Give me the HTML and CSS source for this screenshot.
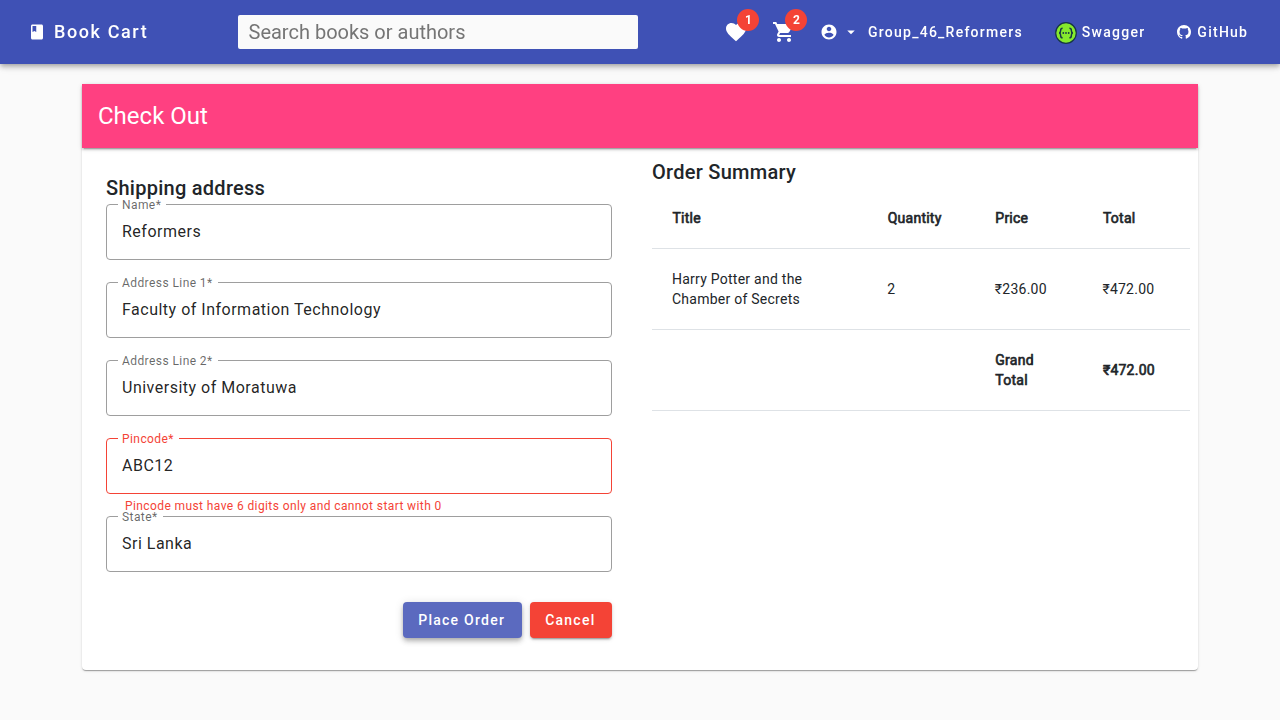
FILE: index.html
```html
<!DOCTYPE html>
<html lang="en">
<head>
<meta charset="utf-8">
<title>Book Cart</title>
<link rel="stylesheet" href="styles.css">
</head>
<body>
<header class="navbar">
  <a class="brand"><svg class="icon-18" viewBox="0 0 24 24"><path d="M18 2H6c-1.100 0-2 .9-2 2v16c0 1.100.9 2 2 2h12c1.100 0 2-.9 2-2V4c0-1.100-.9-2-2-2zM6 4h5v8l-2.500-1.500L6 12V4z"/></svg><span>Book Cart</span></a>
  <input class="search" type="search" placeholder="Search books or authors">
  <nav class="actions">
    <a class="badge-icon"><svg viewBox="0 0 24 24"><path d="M12 21.350l-1.450-1.320C5.400 15.360 2 12.280 2 8.500 2 5.420 4.420 3 7.500 3c1.740 0 3.410.81 4.500 2.090C13.090 3.810 14.760 3 16.500 3 19.580 3 22 5.420 22 8.500c0 3.780-3.400 6.860-8.550 11.540L12 21.350z"/></svg><span class="badge">1</span></a>
    <a class="badge-icon"><svg viewBox="0 0 24 24"><path d="M7 18c-1.100 0-1.990.9-1.990 2S5.900 22 7 22s2-.9 2-2-.9-2-2-2zM1 2v2h2l3.600 7.590-1.350 2.450c-.16.280-.25.610-.25.960 0 1.100.9 2 2 2h12v-2H7.420c-.14 0-.25-.11-.25-.25l.03-.12.900-1.630h7.450c.75 0 1.410-.41 1.750-1.030l3.580-6.490c.08-.14.120-.31.120-.48 0-.55-.45-1-1-1H5.210l-.94-2H1zm16 16c-1.100 0-1.990.9-1.990 2s.89 2 1.990 2 2-.9 2-2-.9-2-2-2z"/></svg><span class="badge">2</span></a>
    <a class="user"><svg class="icon-18" viewBox="0 0 24 24"><path d="M12 2C6.480 2 2 6.480 2 12s4.480 10 10 10 10-4.480 10-10S17.520 2 12 2zm0 3c1.660 0 3 1.340 3 3s-1.340 3-3 3-3-1.340-3-3 1.340-3 3-3zm0 14.200c-2.500 0-4.710-1.280-6-3.220.03-1.990 4-3.080 6-3.080 1.990 0 5.970 1.090 6 3.080-1.290 1.940-3.500 3.220-6 3.220z"/></svg><svg class="icon-18 caret" viewBox="0 0 24 24"><path d="M7 10l5 5 5-5z"/></svg><span>Group_46_Reformers</span></a>
    <a class="swagger"><svg viewBox="0 0 22 22"><circle cx="11" cy="11" r="10.300" fill="#85ea2d" stroke="#173647" stroke-width="1.200"/><g fill="none" stroke="#173647" stroke-width="1.500"><path d="M7.600 6.200c-1.700 0-1.900.7-1.900 1.800 0 1.700.1 2.600-1.500 3 1.600.4 1.500 1.300 1.500 3 0 1.100.2 1.800 1.900 1.800M14.400 6.200c1.700 0 1.900.7 1.900 1.800 0 1.700-.1 2.600 1.500 3-1.600.4-1.500 1.300-1.500 3 0 1.100-.2 1.800-1.900 1.800"/></g><g fill="#173647"><circle cx="8.300" cy="11" r=".9"/><circle cx="11" cy="11" r=".9"/><circle cx="13.700" cy="11" r=".9"/></g></svg><span>Swagger</span></a>
    <a class="github"><svg viewBox="0 0 16 16"><path d="M8 0C3.580 0 0 3.580 0 8c0 3.540 2.290 6.530 5.470 7.590.4.070.55-.17.55-.38 0-.19-.01-.82-.01-1.490-2.010.37-2.530-.49-2.690-.94-.09-.23-.48-.94-.82-1.130-.28-.15-.68-.52-.01-.53.63-.01 1.080.58 1.230.82.720 1.210 1.870.87 2.330.66.070-.52.280-.87.510-1.070-1.780-.2-3.640-.89-3.640-3.950 0-.87.310-1.590.82-2.150-.08-.2-.36-1.020.08-2.120 0 0 .67-.21 2.200.82.640-.18 1.320-.27 2-.27s1.360.09 2 .27c1.530-1.040 2.200-.82 2.200-.82.440 1.100.16 1.920.08 2.120.51.560.82 1.270.82 2.150 0 3.070-1.870 3.750-3.650 3.950.29.250.54.730.54 1.480 0 1.070-.01 1.930-.01 2.200 0 .21.150.46.550.38A8.010 8.010 0 0 0 16 8c0-4.420-3.580-8-8-8z"/></svg><span>GitHub</span></a>
  </nav>
</header>
<main class="card">
  <div class="card-header">Check Out</div>
  <div class="columns">
    <section class="shipping">
      <h2>Shipping address</h2>
      <form class="fields">
        <fieldset class="field"><legend>Name*</legend><div class="value">Reformers</div></fieldset>
        <fieldset class="field"><legend>Address Line 1*</legend><div class="value">Faculty of Information Technology</div></fieldset>
        <fieldset class="field"><legend>Address Line 2*</legend><div class="value">University of Moratuwa</div></fieldset>
        <fieldset class="field invalid"><legend>Pincode*</legend><div class="value">ABC12</div></fieldset>
        <div class="error">Pincode must have 6 digits only and cannot start with 0</div>
        <fieldset class="field"><legend>State*</legend><div class="value">Sri Lanka</div></fieldset>
      </form>
      <div class="buttons"><button class="btn primary">Place Order</button><button class="btn warn">Cancel</button></div>
    </section>
    <section class="summary">
      <h2>Order Summary</h2>
      <div class="row bold"><div>Title</div><div>Quantity</div><div>Price</div><div>Total</div></div>
      <div class="row"><div>Harry Potter and the Chamber of Secrets</div><div>2</div><div>₹236.00</div><div>₹472.00</div></div>
      <div class="row bold"><div></div><div></div><div>Grand Total</div><div>₹472.00</div></div>
    </section>
  </div>
</main>
</body>
</html>
```
FILE: styles.css
```css
* { box-sizing: border-box; }
body {
  margin: 0;
  height: 720px;
  overflow: hidden;
  background: #fafafa;
  color: #212529;
  font-family: Roboto, "Liberation Sans", sans-serif;
  font-size: 14px;
}
svg { display: block; fill: currentColor; flex: none; }
.navbar {
  position: relative;
  height: 64px;
  display: flex;
  align-items: center;
  padding: 0 31px 0 28px;
  background: #3f51b5;
  color: #fff;
  font-weight: 500;
  letter-spacing: 1.25px;
  will-change: transform;
  box-shadow: 0 2px 4px -1px rgba(0,0,0,.2), 0 4px 5px rgba(0,0,0,.14), 0 1px 10px rgba(0,0,0,.12);
}
.icon-18 { width: 18px; height: 18px; }
.brand { display: flex; align-items: center; gap: 8px; width: 210px; font-size: 18px; line-height: 20px; letter-spacing: 1.6px; }
.search {
  width: 400px;
  height: 34px;
  padding: 0 10.5px;
  border: 0;
  border-radius: 2px;
  background: #fafafa;
  font: 400 20px Roboto, sans-serif;
}
.search::placeholder { color: #757575; }
.actions { flex: 1; display: flex; align-items: center; }
.badge-icon { position: relative; margin-left: 86px; }
.badge-icon + .badge-icon { margin-left: 24px; }
.badge-icon svg { width: 24px; height: 24px; }
.badge {
  position: absolute;
  left: 13px;
  top: -11px;
  width: 22px;
  height: 22px;
  padding-left: 1px;
  border-radius: 50%;
  background: #f44336;
  font: 700 12px/22px Roboto, sans-serif;
  letter-spacing: 0;
  text-align: center;
}
.user { display: flex; align-items: center; margin-left: 24px; }
.caret { margin: 0 8px 0 4px; }
.swagger { display: flex; align-items: center; gap: 5px; margin-left: 32px; }
.swagger svg { width: 22px; height: 22px; margin-top: 2px; }
.github { display: flex; align-items: center; gap: 6px; margin-left: 32px; }
.github svg { width: 14px; height: 14px; }
.card {
  width: 1116px;
  height: 586px;
  margin: 20px auto 0;
  border-radius: 4px;
  background: #fff;
  box-shadow: 0 2px 1px -1px rgba(0,0,0,.2), 0 1px 1px rgba(0,0,0,.14), 0 1px 3px rgba(0,0,0,.12);
}
.card-header {
  height: 64px;
  padding: 0 16px;
  background: #ff4081;
  color: #fff;
  font-size: 24px;
  line-height: 64px;
  box-shadow: 0 3px 1px -2px rgba(0,0,0,.2), 0 2px 2px rgba(0,0,0,.14), 0 1px 5px rgba(0,0,0,.12);
}
.columns { display: flex; gap: 40px; padding: 8px 8px 0 24px; }
h2 { margin: 0; font-size: 20px; line-height: 32px; font-weight: 500; letter-spacing: .27px; }
.shipping { width: 506px; padding-top: 16px; }
.summary { width: 538px; }
.fields { display: flex; flex-direction: column; }
.field {
  min-width: 0;
  height: 64px;
  margin: -8px 0 22px;
  padding: 0 11px;
  border: 1px solid #9e9e9e;
  border-radius: 4px;
}
.field legend {
  height: 16px;
  padding: 0 5px 0 4px;
  color: rgba(0,0,0,.6);
  font-size: 12px;
  line-height: 19px;
  letter-spacing: .42px;
}
.value { padding: 8px 4px 0; color: rgba(0,0,0,.87); font-size: 16px; line-height: 24px; letter-spacing: .5px; }
.field.invalid { border-color: #f44336; margin-bottom: 4px; }
.field.invalid legend { color: #f44336; }
.error { height: 18px; padding-left: 19px; color: #f44336; font-size: 12px; line-height: 17px; letter-spacing: .4px; }
.buttons { display: flex; justify-content: flex-end; gap: 8px; padding-top: 8px; }
.btn {
  height: 36px;
  padding: 0 16.5px 0 15.5px;
  border: 0;
  border-radius: 4px;
  color: #fff;
  font: 500 14px Roboto, sans-serif;
  letter-spacing: 1.25px;
  box-shadow: 0 3px 1px -2px rgba(0,0,0,.2), 0 2px 2px rgba(0,0,0,.14), 0 1px 5px rgba(0,0,0,.12);
}
.primary { background: #5b6abf; box-shadow: 0 2px 4px -1px rgba(0,0,0,.2), 0 4px 5px rgba(0,0,0,.14), 0 1px 10px rgba(0,0,0,.12); }
.warn { background: #f44336; }
.row {
  display: grid;
  grid-template-columns: 2fr 1fr 1fr 1fr;
  align-items: center;
  border-bottom: 1px solid #dee2e6;
  line-height: 20px;
  letter-spacing: .25px;
}
.row > div { padding: 20px; }
.bold { -webkit-text-stroke: .65px currentColor; }
.bold > div { padding: 20px 19.5px 20px 20.5px; }
```
